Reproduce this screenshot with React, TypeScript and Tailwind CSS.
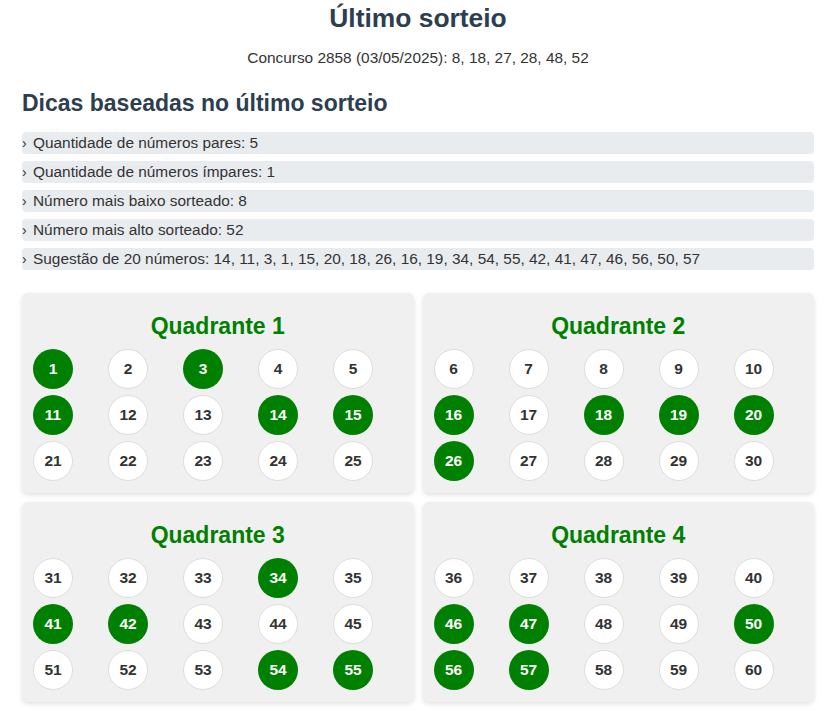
import React from 'react';

const drawn = [1, 3, 11, 14, 15, 16, 18, 19, 20, 26, 34, 41, 42, 54, 55, 46, 47, 50, 56, 57];

const dicas = [
  'Quantidade de números pares: 5',
  'Quantidade de números ímpares: 1',
  'Número mais baixo sorteado: 8',
  'Número mais alto sorteado: 52',
  'Sugestão de 20 números: 14, 11, 3, 1, 15, 20, 18, 26, 16, 19, 34, 54, 55, 42, 41, 47, 46, 56, 50, 57',
];

// quadrant q: rows of 5 numbers
const quadNumbers = (q: number) => {
  const colStart = q === 1 || q === 3 ? 1 : 6;
  const rowStart = q <= 2 ? 0 : 3;
  const nums: number[] = [];
  for (let r = 0; r < 3; r++) {
    for (let c = 0; c < 5; c++) {
      nums.push((rowStart + r) * 10 + colStart + c);
    }
  }
  return nums;
};

const Ball = ({ n }: { n: number }) => {
  const on = drawn.includes(n);
  return (
    <div
      className={
        on
          ? 'w-10 h-10 rounded-full bg-[#008000] text-white flex items-center justify-center text-[15.5px] font-bold'
          : 'w-10 h-10 rounded-full bg-white border border-[#dddddd] text-[#333333] flex items-center justify-center text-[15.5px] font-bold'
      }
    >
      {n}
    </div>
  );
};

const Quadrante = ({ q }: { q: number }) => (
  <div className="bg-[#f0f0f0] rounded-md shadow-[0_2px_5px_rgba(0,0,0,0.12)] pt-[20px] pb-3 pl-[11px] h-[200px]">
    <h3 className="text-center text-[23px] leading-[26px] font-bold text-[#008000] mb-[10px] pr-[11px]">Quadrante {q}</h3>
    <div className="grid grid-cols-[repeat(5,40px)] gap-x-[35px] gap-y-[6px]">
      {quadNumbers(q).map((n) => (
        <Ball key={n} n={n} />
      ))}
    </div>
  </div>
);

export default function App() {
  return (
    <div className="min-h-screen bg-white px-[22px] pr-[20px] font-['Liberation_Sans',Arial,sans-serif] text-[#333333]">
      <h1 className="pt-[2px] text-center text-[26.4px] leading-8 font-bold text-[#2c3e50]">Último sorteio</h1>
      <p className="mt-[14px] text-center text-[15.4px] leading-5">Concurso 2858 (03/05/2025): 8, 18, 27, 28, 48, 52</p>

      <h2 className="mt-[22px] text-[23px] leading-[26px] font-bold text-[#2c3e50]">Dicas baseadas no último sorteio</h2>
      <ul className="mt-[16px] flex flex-col gap-[7px]">
        {dicas.map((d) => (
          <li key={d} className="h-[22px] bg-[#e9ecef] rounded flex items-center text-[15.4px]">
            <span className="w-[11px] text-[14px]">›</span>
            {d}
          </li>
        ))}
      </ul>

      <div className="mt-[23px] grid grid-cols-2 gap-[9px]">
        <Quadrante q={1} />
        <Quadrante q={2} />
        <Quadrante q={3} />
        <Quadrante q={4} />
      </div>
    </div>
  );
}
